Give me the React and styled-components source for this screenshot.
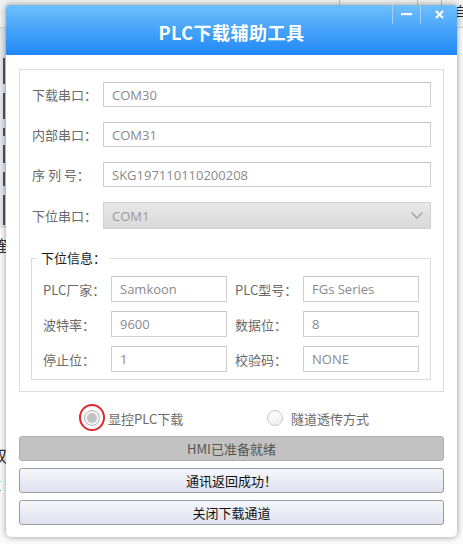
import React from "react";
import styled, { createGlobalStyle } from "styled-components";

const GlobalStyle = createGlobalStyle`
  * { box-sizing: border-box; }
  html, body { margin: 0; padding: 0; }
  body {
    width: 463px;
    height: 544px;
    overflow: hidden;
    background: #fbfbfb;
    font-family: "Open Sans", "Noto Sans CJK SC", sans-serif;
  }
`;

const Desktop = styled.div`
  position: relative;
  width: 463px;
  height: 544px;
  overflow: hidden;
  background: #fbfbfb;
`;

/* ---- host application behind the dialog ---- */
const HostToolbar = styled.div`
  display: flex;
  height: 28px;
  background: #f1f1f1;
  border-bottom: 1px solid #cfcfcf;
`;

const HostCell = styled.div`
  width: ${p => p.$w}px;
  height: 21px;
  border-right: 1px solid #bdbdbd;
  font-family: "Noto Sans CJK SC", sans-serif;
  font-size: 13px;
  line-height: 21px;
  padding-left: ${p => p.$pad || 0}px;
  color: #222;
  flex: none;
`;

const HostBody = styled.div`
  display: flex;
`;

const HostSide = styled.div`
  width: 8px;
  display: flex;
  flex-direction: column;
  background: linear-gradient(90deg, #e6eaf0, #d6dce4);
  padding-top: 30px;
  height: 200px;
  gap: 9px;
`;

const Tick = styled.div`
  width: 2px;
  height: ${p => p.$h}px;
  margin-left: 3px;
  background: #555;
`;

const HostText = styled.div`
  font-family: "Noto Sans CJK SC", sans-serif;
  font-size: 16px;
  line-height: 30px;
  color: #333;
  margin-left: -9px;
  margin-top: ${p => p.$top || 0}px;
`;

/* ---- dialog ---- */
const Window = styled.div`
  position: absolute;
  left: 6px;
  top: 5px;
  width: 451px;
  height: 532px;
  background: #fff;
  border-radius: 3px 3px 5px 5px;
  box-shadow: 0 0 6px rgba(0, 0, 0, 0.4);
  display: flex;
  flex-direction: column;
`;

const TitleBar = styled.div`
  position: relative;
  height: 50px;
  flex: none;
  padding-top: 4px;
  background: linear-gradient(#6fbffc, #1f87f6);
  border-radius: 3px 3px 0 0;
  display: flex;
  align-items: center;
  justify-content: center;
  color: #fff;
  font-family: "Noto Sans CJK SC", sans-serif;
  font-weight: 700;
  font-size: 18px;
  letter-spacing: 0.5px;
`;

const Controls = styled.div`
  position: absolute;
  top: 0;
  right: 0;
  display: flex;
  height: 19px;
`;

const ControlButton = styled.div`
  width: ${p => p.$w}px;
  height: 19px;
  border-left: 1px solid rgba(180, 215, 250, 0.8);
  display: flex;
  align-items: center;
  justify-content: center;
`;

const Body = styled.div`
  flex: 1;
  padding: 14px 13px 0 13px;
  display: flex;
  flex-direction: column;
`;

const Panel = styled.div`
  border: 1px solid #dcdcdc;
  padding: 12px 11px 11px 12px;
`;

const Row = styled.div`
  display: flex;
  align-items: center;
  height: ${p => p.$h || 25}px;
  margin-bottom: ${p => p.$mb ?? 15}px;
`;

const Label = styled.div`
  width: ${p => p.$w || 71}px;
  flex: none;
  font-family: "Noto Sans CJK SC", sans-serif;
  font-size: 13px;
  color: #6a6a6a;
  white-space: pre;
`;

const Input = styled.div`
  width: ${p => p.$w || 328}px;
  height: 100%;
  flex: none;
  border: 1px solid #cfcfcf;
  border-top-color: #c4c4c4;
  background: #fff;
  padding: 0 8px;
  display: flex;
  align-items: center;
  font-size: 13px;
  color: #8a8a8a;
`;

const Select = styled(Input)`
  background: linear-gradient(#e8e8e8, #d9d9d9);
  border-color: #d2d2d2;
  justify-content: space-between;
  color: #9a9a9a;
  padding-right: 6px;
`;

const Group = styled.fieldset`
  margin: 20px 0 0 -1px;
  width: 400px;
  border: 1px solid #dcdcdc;
  padding: 9px 11px 7px 11px;
  display: flex;
  flex-direction: column;
  gap: 9px;
`;

const Legend = styled.legend`
  margin-left: -6px;
  padding: 0 4px;
  font-family: "Noto Sans CJK SC", sans-serif;
  font-size: 13px;
  line-height: 18px;
  color: #1a1a1a;
`;

const InfoRow = styled.div`
  display: grid;
  grid-template-columns: 68px 116px 8px 68px 116px;
  height: 26px;
  align-items: center;
`;

const RadioRow = styled.div`
  display: flex;
  align-items: center;
  height: 26px;
  margin-top: 13px;
  padding-left: 65px;
`;

const Option = styled.div`
  width: ${p => p.$w}px;
  display: flex;
  align-items: center;
  gap: 8px;
  font-family: "Noto Sans CJK SC", sans-serif;
  font-size: 13px;
  color: #6a6a6a;
`;

const RadioWrap = styled.div`
  position: relative;
  width: 16px;
  height: 16px;
  flex: none;
`;

const RadioCircle = styled.div`
  width: 16px;
  height: 16px;
  border-radius: 50%;
  border: 1px solid ${p => (p.$checked ? "#b5b5b5" : "#c8c8c8")};
  background: ${p => (p.$checked ? "#f2f2f2" : "linear-gradient(#fdfdfd, #f0f0f0)")};
  display: flex;
  align-items: center;
  justify-content: center;
  &::after {
    content: "";
    display: ${p => (p.$checked ? "block" : "none")};
    width: 10px;
    height: 10px;
    border-radius: 50%;
    background: #c2c2c2;
  }
`;

const Highlight = styled.div`
  position: absolute;
  left: -5px;
  top: -6px;
  width: 26px;
  height: 27px;
  border-radius: 50%;
  border: 2.5px solid #e2262b;
`;

const Button = styled.div`
  height: 25px;
  margin-top: ${p => p.$mt}px;
  border-radius: 3px;
  display: flex;
  align-items: center;
  justify-content: center;
  font-family: "Noto Sans CJK SC", sans-serif;
  font-size: 13px;
  border: 1px solid ${p => (p.$disabled ? "#acacac" : "#9a9aa4")};
  background: ${p => (p.$disabled ? "#c2c2c2" : "linear-gradient(#f6f7fc, #dfe2ef)")};
  color: ${p => (p.$disabled ? "#555" : "#111")};
`;

const Chevron = () => (
  <svg width="14" height="9" viewBox="0 0 14 9">
    <path d="M1.5 1.5 L7 7 L12.5 1.5" fill="none" stroke="#a8a8a8" strokeWidth="1.6" />
  </svg>
);

const info = [
  ["PLC厂家：", "Samkoon", "PLC型号：", "FGs Series"],
  ["波特率：", "9600", "数据位：", "8"],
  ["停止位：", "1", "校验码：", "NONE"],
];

export default function App() {
  return (
    <Desktop>
      <GlobalStyle />
      <HostToolbar>
        <HostCell $w={340} />
        <HostCell $w={78} />
        <HostCell $w={24} />
        <HostCell $w={30} $pad={12}>自</HostCell>
      </HostToolbar>
      <HostBody>
        <div>
          <HostSide>
            <Tick $h={26} />
            <Tick $h={26} />
            <Tick $h={8} />
            <Tick $h={18} />
            <Tick $h={14} />
            <Tick $h={30} />
          </HostSide>
          <HostText $top={2}>確</HostText>
          <HostText $top={180}>双</HostText>
          <HostText>C</HostText>
        </div>
      </HostBody>

      <Window>
        <TitleBar>
          PLC下载辅助工具
          <Controls>
            <ControlButton $w={28}>
              <svg width="11" height="3" viewBox="0 0 11 3">
                <rect x="0" y="0" width="11" height="2.2" fill="#fff" />
              </svg>
            </ControlButton>
            <ControlButton $w={37}>
              <svg width="9" height="9" viewBox="0 0 9 9">
                <path d="M1 1 L8 8 M8 1 L1 8" stroke="#fff" strokeWidth="2" />
              </svg>
            </ControlButton>
          </Controls>
        </TitleBar>

        <Body>
          <Panel>
            <Row>
              <Label>下载串口：</Label>
              <Input>COM30</Input>
            </Row>
            <Row>
              <Label>内部串口：</Label>
              <Input>COM31</Input>
            </Row>
            <Row>
              <Label>序 列 号：</Label>
              <Input>SKG197110110200208</Input>
            </Row>
            <Row $h={27} $mb={0}>
              <Label>下位串口：</Label>
              <Select>
                COM1
                <Chevron />
              </Select>
            </Row>
            <Group>
              <Legend>下位信息：</Legend>
              {info.map(r => (
                <InfoRow key={r[0]}>
                  <Label $w={68}>{r[0]}</Label>
                  <Input $w={116}>{r[1]}</Input>
                  <span />
                  <Label $w={68}>{r[2]}</Label>
                  <Input $w={116}>{r[3]}</Input>
                </InfoRow>
              ))}
            </Group>
          </Panel>

          <RadioRow>
            <Option $w={183}>
              <RadioWrap>
                <RadioCircle $checked />
                <Highlight />
              </RadioWrap>
              显控PLC下载
            </Option>
            <Option>
              <RadioWrap>
                <RadioCircle />
              </RadioWrap>
              隧道透传方式
            </Option>
          </RadioRow>

          <Button $disabled $mt={5}>HMI已准备就绪</Button>
          <Button $mt={7}>通讯返回成功！</Button>
          <Button $mt={7}>关闭下载通道</Button>
        </Body>
      </Window>
    </Desktop>
  );
}
